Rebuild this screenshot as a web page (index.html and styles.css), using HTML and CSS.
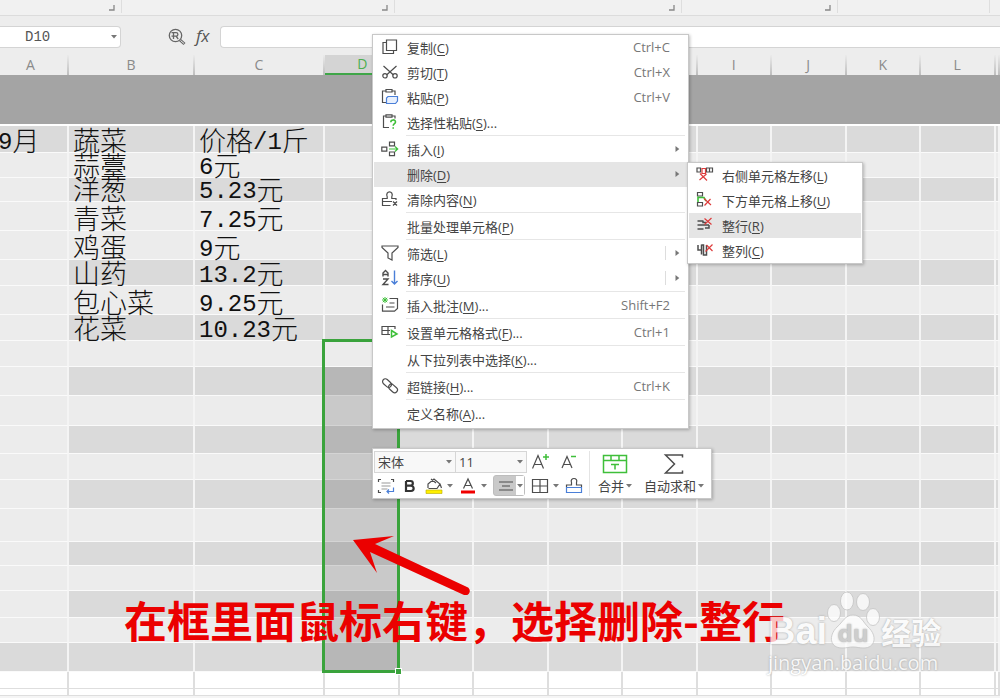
FILE: index.html
```html
<!DOCTYPE html>
<html lang="zh-CN">
<head>
<meta charset="utf-8">
<title>表格</title>
<link rel="stylesheet" href="styles.css">
</head>
<body>
<svg class="defs" aria-hidden="true">
  <symbol id="caret" viewBox="0 0 6 4"><path d="M0 0h6L3 3.6z" fill="#777"/></symbol>
  <symbol id="sub" viewBox="0 0 5 6"><path d="M.5 0v6L4.300 3z" fill="#777"/></symbol>
  <symbol id="corner" viewBox="0 0 6 6"><path d="M5 0v5H0" fill="none" stroke="#888" stroke-width="1.300"/></symbol>
</svg>
<div class="app">
  <div class="ribbon">
    <div class="group g1"><svg><use href="#corner"/></svg></div>
    <div class="group g2"><svg><use href="#corner"/></svg></div>
    <div class="group g3"><svg><use href="#corner"/></svg></div>
    <div class="group g4"><svg><use href="#corner"/></svg></div>
    <div class="group g5"></div>
  </div>

  <div class="formula-bar">
    <div class="name-box">
      <input type="text" value="D10" aria-label="名称框">
      <svg class="caret"><use href="#caret"/></svg>
    </div>
    <div class="fx-tools">
      <svg class="find" viewBox="0 0 18 18" fill="none" stroke="#666" stroke-width="1.300"><circle cx="7.500" cy="7.500" r="6.200"/><path d="M12 12l4.500 4" stroke-width="3"/><path d="M12.500 12.500l3.600 3" stroke="#eee" stroke-width="1"/><path d="M5.500 11V4.600h2.600a1.800 1.800 0 0 1 0 3.600H5.500M8 8.200l2.200 2.800M3.500 4.600h2M3.500 8.200h2"/></svg>
      <span class="fx">fx</span>
    </div>
    <input class="formula" type="text" aria-label="编辑栏">
  </div>

  <div class="sheet">
    <table>
      <colgroup><col class="col-a"><col class="col-b"><col class="col-c"><col class="col"><col class="col"><col class="col"><col class="col"><col class="col"><col class="col"><col class="col"><col class="col"><col class="col"><col></colgroup>
      <thead><tr><th>A<th>B<th>C<th class="active">D<th><th><th><th><th>I<th>J<th>K<th>L<th></tr></thead>
      <tbody>
        <tr class="title"><td colspan="13"></td></tr>
        <tr class="h27 dark full"><td><span class="num first">9</span>月<td>蔬菜<td>价格<span class="num">/1</span>斤<td><td><td><td><td><td><td><td><td><td></tr>
        <tr class="h25"><td><td>蒜薹<td><span class="num">6</span>元<td><td><td><td><td><td><td><td><td><td></tr>
        <tr class="h24 dark"><td><td>洋葱<td><span class="num">5.23</span>元<td><td><td><td><td><td><td><td><td><td></tr>
        <tr class="h29"><td><td>青菜<td><span class="num">7.25</span>元<td><td><td><td><td><td><td><td><td><td></tr>
        <tr class="h29"><td><td>鸡蛋<td><span class="num">9</span>元<td><td><td><td><td><td><td><td><td><td></tr>
        <tr class="h26 dark"><td><td>山药<td><span class="num">13.2</span>元<td><td><td><td><td><td><td><td><td><td></tr>
        <tr class="h29"><td><td>包心菜<td><span class="num">9.25</span>元<td><td><td><td><td><td><td><td><td><td></tr>
        <tr class="h26 dark"><td><td>花菜<td><span class="num">10.23</span>元<td><td><td><td><td><td><td><td><td><td></tr>
        <tr class="h26"><td><td><td><td><td><td><td><td><td><td><td><td><td></tr>
        <tr class="h29 dark"><td><td><td><td class="sel"><td><td><td><td><td><td><td><td><td></tr>
        <tr class="h30"><td><td><td><td class="sel"><td><td><td><td><td><td><td><td><td></tr>
        <tr class="h28 dark"><td><td><td><td class="sel"><td><td><td><td><td><td><td><td><td></tr>
        <tr class="h26"><td><td><td><td class="sel"><td><td><td><td><td><td><td><td><td></tr>
        <tr class="h29 dark"><td><td><td><td class="sel"><td><td><td><td><td><td><td><td><td></tr>
        <tr class="h33"><td><td><td><td class="sel"><td><td><td><td><td><td><td><td><td></tr>
        <tr class="h24 dark"><td><td><td><td class="sel"><td><td><td><td><td><td><td><td><td></tr>
        <tr class="h25"><td><td><td><td class="sel"><td><td><td><td><td><td><td><td><td></tr>
        <tr class="h27 dark"><td><td><td><td class="sel"><td><td><td><td><td><td><td><td><td></tr>
        <tr class="h25"><td><td><td><td class="sel"><td><td><td><td><td><td><td><td><td></tr>
        <tr class="h29 dark full"><td><td><td><td class="sel"><td><td><td><td><td><td><td><td><td></tr>
        <tr class="h17 blank"><td><td><td><td><td><td><td><td><td><td><td><td><td></tr>
        <tr class="h7 blank"><td><td><td><td><td><td><td><td><td><td><td><td><td></tr>
      </tbody>
    </table>
    <div class="selection"><i class="handle"></i></div>
  </div>

  <div class="menu context" role="menu">
    <button class="item"><svg viewBox="0 0 18 18"><path d="M5.500 2h10v10.500h-10zM5.500 4.500H2V15.500H12.500V12.500"/></svg><span>复制(<u>C</u>)</span><kbd>Ctrl+C</kbd></button>
    <button class="item"><svg viewBox="0 0 18 18"><path d="M2.500 3l10 9M15.500 3L5.500 12"/><circle cx="4" cy="12.800" r="2.200"/><circle cx="14" cy="12.800" r="2.200"/></svg><span>剪切(<u>T</u>)</span><kbd>Ctrl+X</kbd></button>
    <button class="item"><svg viewBox="0 0 18 18"><path d="M5 3H1.500v11.500H5M11 3h3v4M5 1.500h6V4H5z"/><path class="blue pale" d="M7 8.500h9.500V13l-2 2.500H5.500V10z"/></svg><span>粘贴(<u>P</u>)</span><kbd>Ctrl+V</kbd></button>
    <button class="item"><svg viewBox="0 0 18 18"><path d="M5 3H2.500v11.500H8M11 3h3v2.500M5 1.800h6v2.400H5z"/><path class="green" d="M9.800 9.200c0-3 4.700-3 4.700-.2 0 1.700-2.300 1.500-2.300 3.800M12.200 14.300v1.500" stroke-width="1.600"/></svg><span>选择性粘贴(<u>S</u>)...</span></button>
    <hr>
    <button class="item"><svg viewBox="0 0 18 18"><path d="M.8 7.200h5v4h-5zM8.500 2.200h5v3.600h-5zM8.500 12h5v3.600h-5z"/><path class="green" d="M8 9h8.500M14 6.500L16.700 9 14 11.500"/></svg><span>插入(<u>I</u>)</span><svg class="sub"><use href="#sub"/></svg></button>
    <button class="item on"><i></i><span>删除(<u>D</u>)</span><svg class="sub"><use href="#sub"/></svg></button>
    <button class="item"><svg viewBox="0 0 18 18"><path d="M9.500 15.500H1.500V8.500h4.700V6.800C4.800 3.500 6.800 1.800 8.500 1.800s3.700 1.700 2.300 5v1.700H15V10M1.500 11.500h9.500M12 11.500l4 4M16 11.500l-4 4"/></svg><span>清除内容(<u>N</u>)</span></button>
    <hr>
    <button class="item"><i></i><span>批量处理单元格(<u>P</u>)</span></button>
    <hr>
    <button class="item"><svg viewBox="0 0 18 18"><path d="M1 2h16v1.500L11 9v7l-4-2V9L1 3.500z"/></svg><span>筛选(<u>L</u>)</span><b class="split"></b><svg class="sub"><use href="#sub"/></svg></button>
    <button class="item"><svg viewBox="0 0 18 18"><path d="M2 7.500V4L4.500 1.500 7 4v3.500M2 5.500h5M2 10h5L2 15.500h5.500" stroke-width="1.400"/><path class="blue" d="M13.500 1.500v13.500M10.500 12l3 3 3-3" stroke-width="1.400"/></svg><span>排序(<u>U</u>)</span><b class="split"></b><svg class="sub"><use href="#sub"/></svg></button>
    <hr>
    <button class="item"><svg viewBox="0 0 18 18"><path d="M8.500 2.500h8v10L13.500 15.200H1.500V8.500M8.500 7h5M5 11h8.500"/><path class="green" d="M4 1v6M1 4h6M1.800 1.800l4.400 4.400M6.200 1.800L1.800 6.200" stroke-width="1"/></svg><span>插入批注(<u>M</u>)...</span><kbd>Shift+F2</kbd></button>
    <hr>
    <button class="item"><svg viewBox="0 0 18 18"><path d="M9 11.500H1V3.500h13V6M1 7.500h8M7 3.500v8"/><path class="green" d="M10.500 7.500l5.500 3.500-5.500 3z" stroke-width="1.500"/></svg><span>设置单元格格式(<u>F</u>)...</span><kbd>Ctrl+1</kbd></button>
    <hr>
    <button class="item"><i></i><span>从下拉列表中选择(<u>K</u>)...</span></button>
    <hr>
    <button class="item"><svg viewBox="0 0 18 18"><rect x="1" y="3.300" width="10" height="5.600" rx="2.800" transform="rotate(42 6 6.100)"/><rect x="7" y="8.600" width="10" height="5.600" rx="2.800" transform="rotate(42 12 11.400)"/></svg><span>超链接(<u>H</u>)...</span><kbd>Ctrl+K</kbd></button>
    <hr>
    <button class="item"><i></i><span>定义名称(<u>A</u>)...</span></button>
  </div>

  <div class="menu submenu" role="menu">
    <button class="item"><svg viewBox="0 0 18 18"><path d="M1 2h3.500v4H1zM10.500 2h3v4h-3zM13.500 2h3v4h-3z"/><path class="red" d="M6 2.500h3.500v5H6zM4 7.500l7 7M10.500 8l-7 6"/></svg><span>右侧单元格左移(<u>L</u>)</span></button>
    <button class="item"><svg viewBox="0 0 18 18"><path d="M1.500 1.500h5V5h-5zM1.500 11.500h5V15h-5z"/><path class="green" d="M2 5.500v5.500M2 6.500h6l2 3.500"  stroke-width="1.600"/><path class="red" d="M8 7.500l7 6.500M14.500 8L8.500 14.500"/></svg><span>下方单元格上移(<u>U</u>)</span></button>
    <button class="item on"><svg viewBox="0 0 18 18"><path d="M1.500 5h6M1.500 9h11.500M1.500 13h6M7 5v1.500h3M13 9v3H9" stroke-width="1.500"/><path class="red" d="M8.500 2.500l7 6M15.500 2L8.500 8.500"/></svg><span>整行(<u>R</u>)</span></button>
    <button class="item"><svg viewBox="0 0 18 18"><path d="M2 4v5h3M5.500 3.500v10M5.500 4h2v10h3V4" stroke-width="1.500"/><path class="red" d="M10.500 4l6 6M16.500 3.500l-7 7"/></svg><span>整列(<u>C</u>)</span></button>
  </div>

  <div class="mini">
    <div class="tools">
      <div class="row">
        <label class="combo font"><select aria-label="字体"><option>宋体</option></select><svg class="caret"><use href="#caret"/></svg></label>
        <label class="combo size"><select aria-label="字号"><option>11</option></select><svg class="caret"><use href="#caret"/></svg></label>
        <button class="tool wide" aria-label="增大字号"><svg viewBox="0 0 18 18"><path d="M.5 15.500L6 2.500l5.500 13M2.500 11.500h7"/><path class="green" d="M14 1v6M11 4h6" stroke-width="1.500"/></svg></button>
        <button class="tool wide" aria-label="减小字号"><svg viewBox="0 0 18 18"><path d="M2 15L7 3.500 12 15M3.800 11.500h6.400"/><path class="green" d="M11 3.500h5" stroke-width="1.500"/></svg></button>
      </div>
      <div class="row second">
        <button class="tool" aria-label="自动换行"><svg viewBox="0 0 18 18"><path d="M1.500 5V2.500H4M14 2.500h2.500V5M1.500 13v2.500H4"/><path d="M4.500 6h9M4.500 9h9M4.500 12h6" stroke="#999"/><path class="blue" d="M16.500 10.500v4H10M12 12.500l-2 2 2 2"/></svg></button>
        <button class="tool" aria-label="加粗"><svg viewBox="0 0 18 18"><path d="M5 4v10h5a2.600 2.600 0 0 0 0-5.300H5M5 4h4.500a2.300 2.300 0 0 1 0 4.700" stroke="#333" stroke-width="2.200"/></svg></button>
        <button class="tool" aria-label="填充颜色"><svg viewBox="0 0 18 18"><path d="M3 11V7l6-5 6 5-3 4.500H3.500M6 2l5 4M15 7l1.500 4"/><path d="M1 13h16v3.500H1z" fill="#ffef00" stroke="#b5a900" stroke-width=".6"/></svg><svg class="caret"><use href="#caret"/></svg></button>
        <button class="tool" aria-label="字体颜色"><svg viewBox="0 0 18 18"><path d="M4.500 11.500L9 2l4.500 9.500M6 8.500h6"/><path d="M2 13.500h14v3H2z" fill="#f00000" stroke="none"/></svg><svg class="caret"><use href="#caret"/></svg></button>
        <button class="tool pressed" aria-label="对齐"><svg viewBox="0 0 18 18"><path d="M2 5h14M5 9h8M2 13h14"/></svg><em><svg class="caret"><use href="#caret"/></svg></em></button>
        <button class="tool" aria-label="边框"><svg viewBox="0 0 18 18"><path d="M1.500 2.500h15v13h-15zM9 2.500v13M1.500 9h15"/></svg><svg class="caret"><use href="#caret"/></svg></button>
        <button class="tool" aria-label="格式刷"><svg viewBox="0 0 18 18"><path d="M1.500 10V8h5V5.500C5.500 3 7 1.500 9 1.500S12.500 3 11.500 5.500V8h5v2"/><path class="blue" d="M1.500 10.500h15v5h-15z"/></svg></button>
      </div>
    </div>
    <button class="big"><svg viewBox="0 0 26 20"><path class="green" d="M1.500 1.500h23v17h-23zM1.500 6.500h23M9 1.500v5M17 1.500v5M9 10.500h8M13 10.500v5" stroke-width="1.500"/></svg><span>合并<svg class="caret"><use href="#caret"/></svg></span></button>
    <button class="big sum"><svg viewBox="0 0 26 20"><path d="M21.500 3.500V1h-17l9 9-9 9h17v-2.500" stroke-width="1.500"/></svg><span>自动求和<svg class="caret"><use href="#caret"/></svg></span></button>
  </div>

  <svg class="arrow" viewBox="0 0 118 60"><path d="M0 5L41 1 22 9 114 52a4 4 0 0 1-3 8L17 17 24 38z" fill="#eb0000"/></svg>
  <p class="note">在框里面鼠标右键，选择删除-整行</p>

  <div class="mark">
    <div class="brand"><span class="bai">Bai</span><svg viewBox="0 0 54 58"><g fill="#fff" stroke="#c6c6c6" stroke-width="1"><ellipse cx="7" cy="22" rx="6.500" ry="8.500"/><ellipse cx="20" cy="10" rx="6.500" ry="9"/><ellipse cx="36" cy="11" rx="6.500" ry="8.500"/><ellipse cx="46" cy="26" rx="6.500" ry="8.500"/><path d="M26 24c8 0 10 7 15 12 10 9 7 21-4 21-5 0-7-1-11-1s-6 1-11 1C3 57 1 45 10 36c6-5 8-12 16-12z"/></g><text x="26" y="51">du</text></svg><span class="jingyan">经验</span></div>
    <div class="site">jingyan.baidu.com</div>
  </div>
</div>
</body>
</html>
```

FILE: styles.css
```css
* { box-sizing: border-box; }

body {
  margin: 0;
  background: #f5f5f5;
  font-family: "Open Sans", "Noto Sans CJK SC", sans-serif;
  font-size: 13px;
  color: #444;
}

button, input, select {
  font: inherit;
  color: inherit;
  border: 0;
  padding: 0;
  background: none;
}

.defs { position: absolute; width: 0; height: 0; }
.app { position: relative; overflow: hidden; }

/* Ribbon edge */
.ribbon {
  display: flex;
  height: 16px;
  background: #f1f1f1;
  border-bottom: 1px solid #dcdcdc;
}
.group {
  display: flex;
  justify-content: flex-end;
  padding: 5px 6px 0 0;
  height: 13px;
  border-right: 1px solid #dedede;
}
.group svg { width: 6px; height: 6px; }
.g1 { width: 122px; }
.g2 { width: 273px; }
.g3 { width: 287px; }
.g4 { width: 156px; }
.g5 { width: 152px; }

/* Formula bar */
.formula-bar {
  display: flex;
  align-items: flex-start;
  height: 39px;
  padding-top: 10px;
  background: #ededed;
}
.name-box {
  display: flex;
  align-items: center;
  width: 121px;
  height: 22px;
  padding-right: 3px;
  background: #fff;
  border: 1px solid #d4d4d4;
  border-left: 0;
  border-radius: 0 4px 4px 0;
}
.name-box input {
  flex: 1;
  min-width: 0;
  padding-left: 25px;
  font: 14px "Liberation Mono", monospace;
  color: #555;
}
.caret { width: 6px; height: 4px; flex: none; }
.fx-tools {
  display: flex;
  align-items: center;
  gap: 10px;
  width: 99px;
  height: 22px;
  padding-left: 47px;
}
.find { width: 18px; height: 18px; }
.fx { padding-bottom: 3px; font: italic 17px "Open Sans", sans-serif; color: #555; }
.formula {
  flex: 1;
  height: 22px;
  background: #fff;
  border: 1px solid #d4d4d4;
  border-right: 0;
  border-radius: 4px 0 0 4px;
}

/* Sheet */
.sheet { position: relative; }
table {
  width: 100%;
  table-layout: fixed;
  border-collapse: separate;
  border-spacing: 0;
}
.col-a { width: 6.9%; }
.col-b { width: 12.6%; }
.col-c { width: 13%; }
.col { width: 7.45%; }

th {
  height: 20px;
  padding: 0;
  background: #ededed;
  border-right: 2px solid;
  border-image: linear-gradient(#ededed, #bcbcbc) 1;
  font-size: 14px;
  font-weight: 400;
  line-height: 18px;
  color: #8a8a8a;
}
th:first-child { padding-right: 6px; }
th.active {
  background: #d4d4d4;
  border-image: none;
  border-right: 0;
  border-bottom: 2px solid #3fa648;
  color: #4caf50;
}

td {
  padding: 0 0 2px 4px;
  background: #ececec;
  border-right: 2px solid #f4f4f4;
  border-bottom: 1px solid #fafafa;
  font-family: "Noto Sans CJK SC", sans-serif;
  font-size: 27px;
  font-weight: 300;
  line-height: 20px;
  vertical-align: bottom;
  white-space: nowrap;
  color: #111;
}
td:first-child { padding-left: 0; }
.num {
  font-family: "Liberation Mono", monospace;
  font-size: 24px;
  font-weight: 400;
  line-height: 0;
  vertical-align: 2px;
}
.num.first { margin-left: -2px; }
.dark td { background: #dadada; }
.dark:not(.full) td:first-child { background: #ececec; }
td.sel { background: #c9c9c9; border-bottom-color: #d4d4d4; }
.dark td.sel { background: #b7b7b7; }
.title td {
  height: 51px;
  background: #a4a4a4;
  border-right: 0;
  border-bottom: 2px solid #fff;
}
.blank td { padding: 0; background: #fff; border-color: #dedede; }

.h7 { height: 7px; }
.h17 { height: 17px; }
.h24 { height: 24px; }
.h25 { height: 25px; }
.h26 { height: 26px; }
.h27 { height: 27px; }
.h28 { height: 28px; }
.h29 { height: 29px; }
.h30 { height: 30px; }
.h33 { height: 33px; }

.selection {
  position: absolute;
  left: 32.2%;
  top: 284px;
  bottom: 23px;
  width: 7.8%;
  border: 3px solid #3aa33c;
}
.handle {
  position: absolute;
  right: -5px;
  bottom: -5px;
  width: 7px;
  height: 7px;
  background: #3aa33c;
  border: 1px solid #fff;
}

/* Menus */
.menu {
  position: absolute;
  display: flex;
  flex-direction: column;
  background: #fff;
  border: 1px solid #c8c8c8;
  box-shadow: 1px 1px 3px rgba(0, 0, 0, .25);
}
.context { left: 372px; top: 34px; width: 317px; padding: 0 1px 2px; }
.submenu { left: 687px; top: 162px; width: 176px; padding: 0 1px; }

.item {
  display: grid;
  grid-template-columns: 18px 1fr auto 17px;
  align-items: center;
  height: 25px;
  padding: 0 0 1px 7px;
  text-align: left;
  white-space: nowrap;
}
.item.on { background: #e5e5e5; }
.item > svg:first-child { width: 18px; height: 18px; }
.item > span { grid-column: 2; padding-left: 8px; }
.item u { text-underline-offset: 2px; }
.item kbd { grid-column: 3; font: inherit; color: #777; }
.item .sub { grid-column: 4; width: 5px; height: 6px; margin-left: 5px; }
.split { grid-column: 3; width: 1px; height: 14px; margin-right: 4px; background: #ddd; }
.menu hr {
  width: 279px;
  height: 2px;
  margin: 0 2px 0 auto;
  border: 0;
  border-top: 1px solid #e6e6e6;
}
.submenu .item { grid-template-columns: 18px 1fr; }

.item svg, .tool svg, .big svg {
  fill: none;
  stroke: #4d4d4d;
  stroke-width: 1.2px;
}
svg.caret, svg.sub { stroke: none !important; }
.item .green, .tool .green, .big .green { stroke: #3fbf3a; }
.item .blue, .tool .blue { stroke: #4a7fd8; }
.item .pale { fill: #e8f0fd; }
.item .red { stroke: #dd3c3c; }

/* Floating format bar */
.mini {
  position: absolute;
  left: 372px;
  top: 448px;
  display: flex;
  width: 340px;
  height: 51px;
  padding: 2px 1px;
  background: #fff;
  border: 1px solid #c8c8c8;
  box-shadow: 1px 1px 3px rgba(0, 0, 0, .25);
}
.tools {
  width: 216px;
  margin: 0 1px 0 0;
  border-right: 1px solid #e4e4e4;
}
.row { display: flex; align-items: center; height: 22px; }
.second { height: 25px; gap: 6px; padding-left: 3px; }
.combo {
  display: flex;
  align-items: center;
  height: 22px;
  padding: 0 3px;
  background: #f8f8f8;
  border: 1px solid #d6d6d6;
}
.combo select { flex: 1; min-width: 0; appearance: none; outline: 0; }
.font { width: 82px; }
.size { width: 71px; border-left: 0; }
.tool { display: flex; align-items: center; gap: 4px; }
.tool > svg:first-child { width: 18px; height: 18px; }
.wide { width: 28px; justify-content: center; }
.tool.pressed {
  width: 32px;
  height: 21px;
  padding-left: 3px;
  gap: 1px;
  background: #c9c9c9;
  border: 1px solid #bdbdbd;
  border-radius: 3px;
}
.pressed em {
  display: flex;
  align-items: center;
  height: 19px;
  padding: 0 1px;
  background: #fff;
}
.big {
  display: flex;
  flex-direction: column;
  align-items: center;
  gap: 2px;
  width: 48px;
  padding-top: 3px;
}
.big > svg { width: 26px; height: 20px; }
.big span { display: flex; align-items: center; gap: 2px; line-height: 20px; white-space: nowrap; }
.sum { width: 70px; }

/* Annotation */
.arrow { position: absolute; left: 353px; top: 535px; width: 118px; height: 60px; }
.note {
  position: absolute;
  left: 124px;
  top: 589px;
  margin: 0;
  font-family: "Noto Sans CJK SC", sans-serif;
  font-size: 43px;
  font-weight: 700;
  line-height: 60px;
  white-space: nowrap;
  color: #eb0000;
}

/* Watermark */
.mark {
  position: absolute;
  left: 768px;
  top: 591px;
  color: #fff;
  opacity: .76;
  text-shadow: 0 0 2px #888;
}
.brand { display: flex; align-items: flex-end; height: 58px; }
.brand svg { width: 54px; height: 58px; }
.brand text {
  font: 700 24px "Open Sans", sans-serif;
  text-anchor: middle;
  fill: #c4c4c4;
}
.bai { font: 700 38px/36px "Liberation Sans", sans-serif; }
.jingyan { font: 700 30px/36px "Noto Sans CJK SC", sans-serif; }
.site { font-size: 20px; line-height: 28px; }
```
